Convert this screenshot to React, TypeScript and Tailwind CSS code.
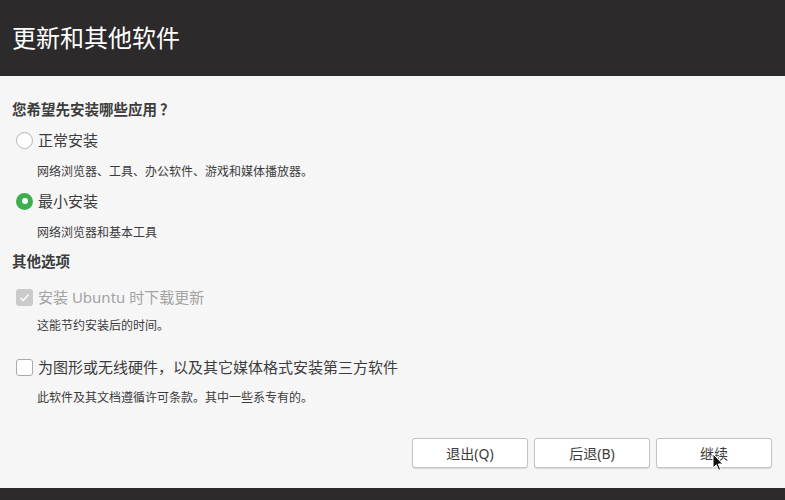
import React from "react";

const font = { fontFamily: '"Noto Sans", "Noto Sans CJK SC", sans-serif' };

function Radio({ checked }: { checked: boolean }) {
  return checked ? (
    <span className="flex h-[17px] w-[17px] items-center justify-center rounded-full bg-[#3fae4e]">
      <span className="h-[6px] w-[6px] rounded-full bg-white" />
    </span>
  ) : (
    <span className="h-[17px] w-[17px] rounded-full border border-[#b5b5b5] bg-white shadow-[inset_0_1px_1px_rgba(0,0,0,0.05)]" />
  );
}

export default function App() {
  return (
    <div lang="zh-CN" className="relative flex h-[500px] w-[785px] flex-col bg-[#f6f6f7] text-[#3c3c3c]" style={font}>
      <div className="flex h-[76px] shrink-0 items-center bg-[#2c2a2b] pl-[12px]">
        <span className="text-[24px] leading-none text-white">更新和其他软件</span>
      </div>
      <div className="flex flex-1 flex-col pl-[12px]">
        <div className="mt-[23px] text-[14.5px] font-bold leading-[20px]">
          您希望先安装哪些应用<span className="ml-[3px] inline-block w-[12px] [font-family:'Noto_Sans_CJK_SC',sans-serif]">？</span>
        </div>
        <div className="mt-[11px] flex h-[20px] items-center pl-[4px]">
          <Radio checked={false} />
          <span className="ml-[5px] text-[15px]">正常安装</span>
        </div>
        <div className="mt-[14px] pl-[25px] text-[12px] leading-[16px]">网络浏览器、工具、办公软件、游戏和媒体播放器。</div>
        <div className="mt-[11px] flex h-[20px] items-center pl-[4px]">
          <Radio checked={true} />
          <span className="ml-[5px] text-[15px]">最小安装</span>
        </div>
        <div className="mt-[14px] pl-[25px] text-[12px] leading-[16px]">网络浏览器和基本工具</div>
        <div className="mt-[10px] text-[14.5px] font-bold leading-[20px]">其他选项</div>
        <div className="mt-[16px] flex h-[20px] items-center pl-[4px]">
          <span className="flex h-[17px] w-[17px] items-center justify-center rounded-[3px] bg-[#cacaca]">
            <svg width="11" height="11" viewBox="0 0 11 11" fill="none">
              <path d="M1.5 5.8 L4.3 8.5 L9.5 2.5" stroke="white" strokeWidth="1.4" />
            </svg>
          </span>
          <span className="ml-[5px] text-[15px] text-[#a3a3a3]">安装 Ubuntu 时下载更新</span>
        </div>
        <div className="mt-[11px] pl-[25px] text-[12px] leading-[16px]">这能节约安装后的时间。</div>
        <div className="mt-[23px] flex h-[20px] items-center pl-[4px]">
          <span className="h-[17px] w-[17px] rounded-[3px] border border-[#ababab] bg-white" />
          <span className="ml-[5px] text-[15px]">为图形或无线硬件，以及其它媒体格式安装第三方软件</span>
        </div>
        <div className="mt-[13px] pl-[25px] text-[12px] leading-[16px]">此软件及其文档遵循许可条款。其中一些系专有的。</div>
        <div className="mt-auto mb-[20px] flex justify-end gap-[6px] pr-[13px]">
          {["退出(Q)", "后退(B)", "继续"].map((t) => (
            <button
              key={t}
              className="flex h-[30px] w-[116px] items-center justify-center rounded-[3px] border border-[#c4c4c4] bg-white text-[14px] text-[#3c3c3c] shadow-[0_1px_1px_rgba(0,0,0,0.12)]"
            >
              {t}
            </button>
          ))}
        </div>
      </div>
      <div className="h-[12px] shrink-0 bg-[#2c2a2b]" />
      <svg className="absolute left-[712px] top-[453px]" width="12" height="19" viewBox="0 0 12 19">
        <path d="M1 1 L1 15 L4.3 11.8 L6.6 17.3 L8.6 16.4 L6.3 11 L10.8 11 Z" fill="#111" stroke="white" strokeWidth="1" />
      </svg>
    </div>
  );
}
